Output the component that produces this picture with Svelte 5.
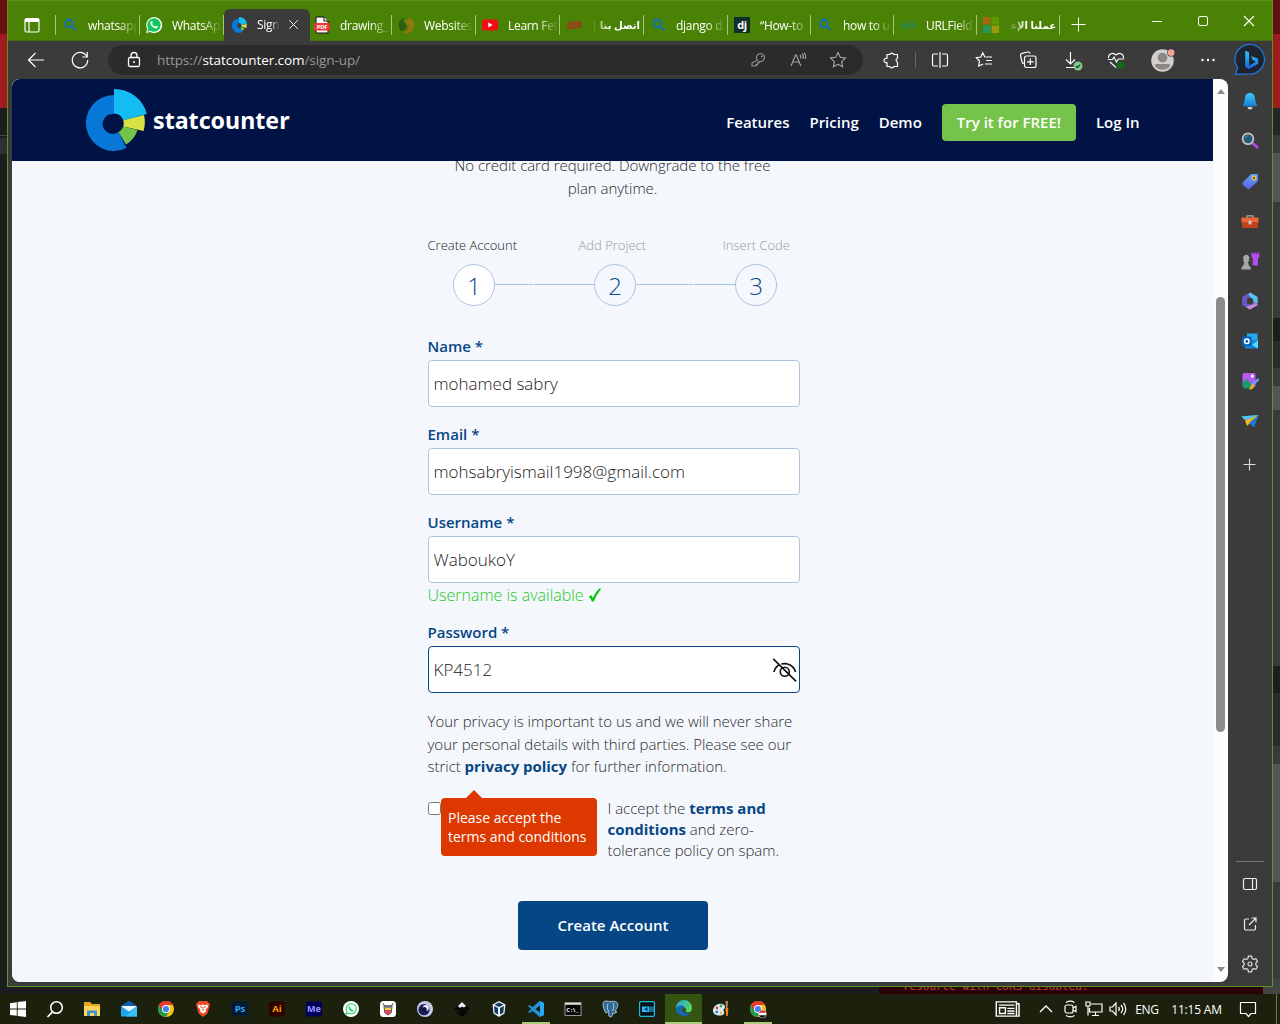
<script>
  const search = '<g fill="none" stroke="#0e6fc4" stroke-width="1.900"><circle cx="9" cy="8.500" r="3.800"/><path d="M11.800 11.300l3.700 3.700"/></g>';
  const pie = '<path d="M10 3.500A7.200 7.200 0 1 0 13.500 17L11.500 13A2.600 2.600 0 1 1 10 8z" fill="#0a78d6"/><path d="M10 2A8.500 8.500 0 0 1 18 8.500L12.500 10A2.600 2.600 0 0 0 10 8z" fill="#13bcf0"/><path d="M12.600 10L17.600 9V13L12.500 11.500z" fill="#d7e34a"/><path d="M12.400 12L15.600 13.200A7 7 0 0 1 13 16L11.500 13z" fill="#76c34b"/>';
  const chrome = '<circle cx="10" cy="10" r="8" fill="#fbc116"/><path d="M10 10L3.100 6A8 8 0 0 1 17 6H10z" fill="#e33b2e"/><path d="M3.100 6A8 8 0 0 0 9.800 18L13.500 12L10 10z" fill="#229a4b"/><path d="M3.100 6A8 8 0 0 1 17 6H10L6.500 12z" fill="#e33b2e"/><circle cx="10" cy="10" r="4" fill="#fff"/><circle cx="10" cy="10" r="3.100" fill="#4084f0"/>';
  const whatsapp = '<path d="M2 18l1.200-4A8 8 0 1 1 6.200 17z" fill="#fff"/><path d="M3.300 16.700l1-3.100A6.700 6.700 0 1 1 6.600 15.800z" fill="#10c75b"/><path d="M7 6.200c.7-.6 1.300 0 1.800 1.500l-.7 1c.6 1.400 1.600 2.300 3 2.900l1-.9c1.500.6 2 .9 1.600 1.700-1 1.900-3.200 1.200-5.300-.6S5.700 7.500 7 6.200z" fill="#fff"/>';

  const art = {
    tabs: '<path d="M4.500 3.500h11a1.500 1.500 0 0 1 1.500 1.500v10.500a1.500 1.500 0 0 1-1.500 1.500h-11A1.500 1.500 0 0 1 3 15.500V5a1.500 1.500 0 0 1 1.500-1.500zM7 7v10" fill="none" stroke="#fff" stroke-width="1.200"/><path d="M3 4h14v3H3z" fill="#fff"/>',
    search, pie, chrome, whatsapp,
    pdf: '<path d="M4 2h8l4 4v12H4z" fill="#fff" stroke="#111" stroke-width="1"/><path d="M12 2v4h4" fill="#fff" stroke="#111"/><rect x="2" y="8" width="16" height="7.500" rx="1" fill="#e33"/><text x="10" y="14" font-size="6" font-weight="700" text-anchor="middle" fill="#fff">PDF</text>',
    leaf: '<path d="M9 2.500A8 8 0 0 0 5 16c5-1 7-4 4-7C7 7 7 4 9 2.500z" fill="#2d5c14"/><path d="M6 17.500A8 8 0 0 0 14 3c-4 1-6 3-3 6s1 7-5 8.500z" fill="#907711"/>',
    youtube: '<rect x="2" y="4.500" width="16" height="11" rx="2.500" fill="#f20d12"/><path d="M8.300 7.500v5l4.300-2.500z" fill="#fff"/>',
    stamp: '<path d="M4 7l13-1v7L3 14z" fill="#984016"/><path d="M6 8v4M8 8v4M11 8v4M13 8v4" stroke="#7a681c"/>',
    dj: '<rect x="2" y="2" width="16" height="16" fill="#10302a"/><text x="10" y="13.500" font-size="11" font-weight="700" text-anchor="middle" fill="#fff">dj</text>',
    gfg: '<g fill="none" stroke="#258a4c" stroke-width="1.300"><path d="M2.500 10h15M8.500 8A3 3 0 1 0 8.500 12V10M11.500 8A3 3 0 1 1 11.500 12V10"/></g>',
    ms: '<path d="M2 2h7.500v7.500H2z" fill="#a06810"/><path d="M10.500 2H18v7.500h-7.500z" fill="#5e9a06"/><path d="M2 10.500h7.500V18H2z" fill="#27965c"/><path d="M10.500 10.500H18V18h-7.500z" fill="#98990b"/>',
    plus: '<path d="M9.500 2.500v14M2.500 9.500h14" stroke="#fff" stroke-width="1.100"/>',
    plusThin: '<path d="M9.500 4.500v12M3.500 10.500h12" stroke="#ddd" stroke-width="1.100"/>',
    min: '<path d="M5 10.500h10" stroke="#fff"/>',
    max: '<rect x="5.500" y="5.500" width="9" height="9" rx="1.500" fill="none" stroke="#fff"/>',
    close: '<path d="M5 5l10 10M15 5L5 15" stroke="#fff" stroke-width="1.100"/>',
    back: '<path d="M18 10H2.500M9.500 3l-7 7 7 7" fill="none" stroke="#fff" stroke-width="1.200"/>',
    refresh: '<path d="M16.800 6.500A7.700 7.700 0 1 0 17.700 10M17.300 2v5h-5" fill="none" stroke="#fff" stroke-width="1.200"/>',
    lock: '<rect x="4.500" y="7.500" width="11" height="9" rx="1.500" fill="none" stroke="#fff" stroke-width="1.300"/><path d="M7 7.500V5.500a3 3 0 0 1 6 0v2" fill="none" stroke="#fff" stroke-width="1.300"/><circle cx="10" cy="12" r="1" fill="#fff"/>',
    key: '<path d="M9.500 10.200A4 4 0 1 1 12.300 11.500L11 11.600V13H9.500v1.600H8V16H4v-3z" fill="none" stroke="#969696" stroke-width="1.100"/><circle cx="13.800" cy="6.500" r=".9" fill="#969696"/>',
    read: '<path d="M3 16L7.500 5h.8l4.500 11M4.500 12h6.800M12 5c1 1 1 2.500.4 3.500M14 3.500c1.600 1.800 1.700 4 .8 5.500M16 2.500c2 2.500 2 4.500 1.300 6.500" fill="none" stroke="#a5a5a5" stroke-width="1.100"/>',
    star: '<path d="M10 2.500l2.300 4.800 5.200.7-3.800 3.600.9 5.200L10 14.300l-4.600 2.500.9-5.200L2.500 8l5.200-.7z" fill="none" stroke="#aaa" stroke-width="1.100"/>',
    puzzle: '<path d="M6 4.500h2.700a2.200 2.200 0 0 1 4.100 0h3.700v3.700a2.200 2.200 0 0 0 0 4.100v4.200h-3.700a2.200 2.200 0 0 1-4.100 0H6v-4a2.200 2.200 0 1 1 0-4.100z" fill="none" stroke="#fff" stroke-width="1.200" stroke-linejoin="round"/>',
    split: '<path d="M8 4H4a1.500 1.500 0 0 0-1.500 1.500v9A1.500 1.500 0 0 0 4 16h4M12 4h4a1.500 1.500 0 0 1 1.500 1.500v9A1.500 1.500 0 0 1 16 16h-4M10 2v16" fill="none" stroke="#fff" stroke-width="1.200"/>',
    fav: '<path d="M11 7h-.2L8.800 2.800 6.800 7l-4.500.7L5.500 11l-.8 5 4.500-2M11.500 7H18M12 10.500h6M11 14h7" fill="none" stroke="#fff" stroke-width="1.200"/>',
    collect: '<path d="M6 13.500A2 2 0 0 1 4 12L2.500 5.500A2 2 0 0 1 4 3.300L9.500 2a2 2 0 0 1 2.500 1.500" fill="none" stroke="#fff" stroke-width="1.200"/><rect x="6.500" y="6" width="11.500" height="11.500" rx="2" fill="none" stroke="#fff" stroke-width="1.200"/><path d="M12.300 8.500v6.500M9 11.800h6.600" stroke="#fff" stroke-width="1.200"/>',
    download: '<path d="M7.500 2v12M3 9.500L7.500 14 12 9.500M3 17.500h8" fill="none" stroke="#fff" stroke-width="1.200"/><circle cx="15" cy="16" r="4.500" fill="#80c98b"/><path d="M12.800 16l1.700 1.600 2.700-3" fill="none" stroke="#17351b" stroke-width="1.100"/>',
    heart: '<path d="M10 5.200C7 1.500 2 4 2.500 8M10 5.200C13 1.500 18 4 17.500 8M1.800 9.500h4.500L8 7l2.500 5 1.800-3h6M4 12l6 5.500" fill="none" stroke="#fff" stroke-width="1.100"/><circle cx="14.500" cy="15.200" r="3.500" fill="#0f6f14"/>',
    avatar: '<circle cx="10" cy="10" r="9.800" fill="#d1cfcd"/><circle cx="10" cy="7.500" r="4.200" fill="#8b8784"/><path d="M3.300 14.500q0-1.500 1.500-1.500h10.400q1.500 0 1.500 1.500a8 8 0 0 1-13.400 0z" fill="#8b8784"/><circle cx="17.500" cy="3.200" r="3.400" fill="#3b3b3b"/><circle cx="17.500" cy="3.200" r="2.900" fill="#f9a09b"/>',
    dots: '<g fill="#fff"><circle cx="4.500" cy="10" r="1.200"/><circle cx="10" cy="10" r="1.200"/><circle cx="15.500" cy="10" r="1.200"/></g>',
    bing: '<defs><linearGradient id="bg1" x2="0" y2="1"><stop stop-color="#2ec5ee"/><stop offset="1" stop-color="#1769e8"/></linearGradient></defs><path d="M.8 19L2.300 14.800A9.200 9.200 0 1 1 10.300 18.700Q5 18.700.8 19z" fill="#1d2430" stroke="#1b78dc" stroke-width=".8"/><path d="M7 4.200l2.400.9v8.500l4.300-2.500-2-1-1-2.600 4.400 1.700v3.100l-5.800 3.400L7 14z" fill="url(#bg1)"/>',
    bell: '<defs><linearGradient id="be" x2="0" y2="1"><stop stop-color="#3cc7f1"/><stop offset="1" stop-color="#167fd8"/></linearGradient></defs><path d="M10 2c3.500 0 5 2.500 5 5.500l.8 4 1.600 3.700H2.600l1.600-3.700L5 7.500C5 4.500 6.500 2 10 2z" fill="url(#be)"/><path d="M7.500 16h5a2.500 2.500 0 0 1-5 0z" fill="#ccc"/>',
    magnify: '<path d="M12.500 12l5.500 5" stroke="#b846e8" stroke-width="3"/><circle cx="8" cy="7.800" r="5.400" fill="#245a78" stroke="#c6c3c1" stroke-width="1.800"/><path d="M5.500 7a3 3 0 0 1 3-2.500" stroke="#4c92b5" fill="none"/>',
    tag: '<defs><linearGradient id="tg" x2="0" y2="1"><stop stop-color="#5ca0fa"/><stop offset="1" stop-color="#5b62ec"/></linearGradient></defs><path d="M11 3h6a1 1 0 0 1 1 1v6L9.500 18Q8.500 18.500 7.500 17.800L2.500 13.500Q2 12.500 2.800 11.500z" fill="url(#tg)"/><circle cx="14" cy="7" r="1.900" fill="#4b648d" stroke="#ffc524" stroke-width="1.200"/>',
    toolbox: '<path d="M7 7V4.800h6V7" fill="none" stroke="#aaa" stroke-width="1.300"/><rect x="1.500" y="6.500" width="17" height="5.500" rx="1" fill="#ee6432"/><rect x="2.200" y="11" width="15.600" height="6" rx="1" fill="#c8411d"/><rect x="8.500" y="9.500" width="3" height="4" rx="1" fill="#c8c8c8"/>',
    chess: '<path d="M11.500 1.500h1.800V3h1.300V1.500h1.900V3h1.300V1.500h1.500v5l-1.300 1v7h-5.500l.4-7-1.400-1z" fill="#b24ef0"/><path d="M4 9a3 3 0 1 1 4.500 0l1 1-1.500 1 .7 3 2 2.500V18.500H1.500v-2l2-2.500.8-3L3 10z" fill="#aaa8a6"/>',
    office: '<defs><linearGradient id="of" x2=".8" y2="1"><stop stop-color="#9570e8"/><stop offset=".5" stop-color="#3f73ce"/><stop offset="1" stop-color="#d07cd8"/></linearGradient></defs><path d="M10 1.500L17.500 6v8L10 18.500 2.500 14V6zM7 7.500v5l4 1.500 2.300-2V8L10 6z" fill="url(#of)" fill-rule="evenodd"/><path d="M10 1.500L17.500 6v6l-4.200-1.500V8L8 5z" fill="#5ac2f0"/><path d="M2.500 6L8 2.500 10 6 7 7.800V13l4 1.500-5 1.500-3.500-2z" fill="#6758c4"/><path d="M6 16l5-2 6.500-1v1L10 18.500z" fill="#c58ae0"/>',
    outlook: '<path d="M7 2.500h10.500v10H7z" fill="#28a9ea"/><path d="M5 9h13v8.500H5z" fill="#1583d8"/><path d="M18 9l-6 5 6 3.500z" fill="#50d9ff"/><rect x="2" y="5.500" width="9.500" height="9.500" rx="1" fill="#0564b8"/><circle cx="6.800" cy="10.200" r="2.300" fill="none" stroke="#fff" stroke-width="1.500"/>',
    picture: '<rect x="2.500" y="2" width="13" height="14" rx="1.500" fill="#b35cf0"/><circle cx="12.300" cy="5" r="1.500" fill="#fff"/><path d="M2.500 12L7 8l6 7-3 2.500H3.500z" fill="#179b68"/><path d="M18.500 8L12 15" stroke="#6ea2f7" stroke-width="2.500"/><path d="M12.500 13l2 2c-1.500 3-3 3.500-5.500 3.500 1.500-1.500 1-4.500 3.500-5.500z" fill="#f7ae24"/>',
    plane: '<path d="M1.500 5.500L18.500 4 14 16 9 12z" fill="#2aa5e8"/><path d="M18.500 4L5 9.500 7 15l3-3z" fill="#f6b722"/><path d="M1.500 5.500L18.500 4 5 9z" fill="#53c6f2"/><path d="M18.500 4L9 12l5 4z" fill="#1b79cf"/>',
    panel: '<rect x="3.500" y="4.500" width="13" height="11" rx="1.500" fill="none" stroke="#eee" stroke-width="1.200"/><path d="M12.500 4.500v11" stroke="#eee" stroke-width="1.200"/>',
    external: '<path d="M9 5H6a1.500 1.500 0 0 0-1.500 1.500v8A1.500 1.500 0 0 0 6 16h8a1.500 1.500 0 0 0 1.500-1.500V11M11.500 4H16v4.500M9 11l7-7" fill="none" stroke="#eee" stroke-width="1.200"/>',
    gear: '<path d="M8.400 2.200h3.200l.5 2.300 1.500.9 2.300-.7 1.600 2.800-1.700 1.700v1.700l1.700 1.600-1.600 2.800-2.300-.7-1.500.9-.5 2.300H8.400l-.5-2.300-1.500-.9-2.300.7-1.600-2.800 1.700-1.600V9.200L2.500 7.500l1.600-2.800 2.300.7 1.500-.9z" fill="none" stroke="#ddd" stroke-width="1.200" stroke-linejoin="round"/><circle cx="10" cy="10" r="2" fill="none" stroke="#ddd" stroke-width="1.200"/>',
    eye: '<g fill="none" stroke="#111" stroke-width="1.300"><path d="M1 1.500l18.300 18M1.500 12c.8-3 2.500-4.900 4.600-6M7.500 5.600C12.500 4.300 17.500 7 18.800 12"/><circle cx="10.200" cy="11.800" r="3.600"/></g>',
    windows: '<path d="M2 4.200l6.800-1v6.300H2zM9.700 3L18 2v7.500H9.700zM2 10.500h6.800v6.300L2 15.900zM9.700 10.500H18V18l-8.300-1z" fill="#fff"/>',
    taskSearch: '<circle cx="11.500" cy="8.500" r="5.800" fill="none" stroke="#fff" stroke-width="1.500"/><path d="M7.500 12.800L2.500 18" stroke="#fff" stroke-width="1.700"/>',
    folder: '<path d="M2 3h6l2 2h8v11H2z" fill="#e8a51c"/><path d="M2 7h16v10H2z" fill="#ffd45b"/><path d="M5 11.500h10V17h-2.800v-3H8v3H5z" fill="#3c94d8"/>',
    mail: '<path d="M2 7l8-5.500L18 7v10H2z" fill="#0c5eaa"/><path d="M3 7h14v7H3z" fill="#fff"/><path d="M2 7l8 5.500L18 7v10.500H2z" fill="#1fa4ea"/><path d="M18 7L7 17.500h11z" fill="#38bff5"/><path d="M3 7h14l-7 5z" fill="#eef8ff"/>',
    brave: '<path d="M6 2h8l1.500 1.500L17 5l-.7 3-2 6.500L10 18l-4.300-3.500-2-6.500L3 5l1.500-1.500z" fill="#f24a25"/><path d="M5.500 5.500l2.500.7 2-.7 2 .7 2.500-.7.5 2.500-2.500 2.500.5 2-3 2-3-2 .5-2L5 8z" fill="#fff"/><path d="M7 7.500l2 1M13 7.500l-2 1M10 8v4" stroke="#f24a25"/>',
    ps: '<rect x="2" y="2.500" width="16" height="15" rx="2" fill="#001c33"/><text x="10" y="13.300" font-size="9.500" font-weight="700" text-anchor="middle" fill="#31a8ff">Ps</text>',
    ai: '<rect x="2" y="2.500" width="16" height="15" rx="2" fill="#310000"/><text x="10" y="13.300" font-size="9.500" font-weight="700" text-anchor="middle" fill="#ff9a00">Ai</text>',
    me: '<rect x="2" y="2.500" width="16" height="15" rx="2" fill="#00005b"/><text x="10" y="13.300" font-size="9" font-weight="700" text-anchor="middle" fill="#9999ff">Me</text>',
    wa2: '<circle cx="10" cy="10" r="8" fill="#fff"/><path d="M5 15l.9-2.800A5 5 0 1 1 8 14.200z" fill="none" stroke="#25d366" stroke-width="1.100"/><path d="M8 7.500c.4 2.500 2 4.200 4.300 4.500" stroke="#25d366" stroke-width="1.700" fill="none"/>',
    brush: '<rect x="2" y="2" width="16" height="16" rx="3.500" fill="#fff"/><path d="M6 7l.8 7L10 16l3.200-2 .8-7z" fill="#f5d23c" stroke="#555"/><path d="M7 11h6l-.5 3-2.500 1.500L7.500 14z" fill="#e33e6a"/><path d="M6.500 7h7l-.2 2H6.700z" fill="#8a8aa8"/><path d="M5 4.500l1.500 2.500h7L15 4.500" fill="none" stroke="#555" stroke-width="1.100"/>',
    cinema: '<circle cx="10" cy="10" r="8" fill="#c9cbe6"/><circle cx="9" cy="10.700" r="5.600" fill="#1b1e5c"/><circle cx="10.800" cy="9" r="3" fill="#f4f4fb"/><circle cx="9.300" cy="10.600" r="2.500" fill="#15163a"/>',
    inkscape: '<path d="M10 2.500l7.500 7c.5 1.500-3 1.500-3 2.500s2 .5 1.500 1.500-3 .5-4 3.500h-4c-.5-2-3.500-2-3.500-3s2-1 1.500-2-4-1-3.500-2.500z" fill="#080808"/><path d="M10 3l4 4-2 1.500-2-1-2 1.500L6 7z" fill="#eceef5"/>',
    vbox: '<path d="M10 2l6.500 3.500-1 9L10 18l-5.500-3.500-1-9z" fill="#e6eef8"/><path d="M10 3.500l4.500 2.200L10 8 5.500 5.700zM5 7l4 2v6.500L5.700 13.700zM15 7l-4 2v6.500l3.300-1.800z" fill="#16375f"/>',
    vscode: '<path d="M13.500 2L18 4v12l-4.500 2-7-6.300L3.500 14 2 13l3.300-3L2 7l1.500-1 3 2.300zM14 6.500L9.300 10l4.700 3.500z" fill="#1e94de" fill-rule="evenodd"/><path d="M14 2.200L18 4v12l-4 1.800z" fill="#29a9f2"/>',
    cmd: '<rect x="2" y="4" width="16" height="12.500" fill="#050505" stroke="#bbb" stroke-width=".8"/><path d="M2 3.600h16v2.200H2z" fill="#ddd"/><text x="3.200" y="13" font-size="5.800" font-weight="700" fill="#fff" textLength="12.500">C:\\_</text>',
    postgres: '<path d="M4 2.500c2-1 4 0 6 0s5-1 7 1 0 6-2 8.500l2 .7-2 1.500h-2.500c0 3-1 4-2.500 3.700S8.500 15 8.500 12.500L6 14C3.500 11 2 4 4 2.500z" fill="#346a98" stroke="#a9bdcf" stroke-width="1"/><path d="M8 4.500c-1 3-1 5 .5 7.500M12.500 4c2 2 1.500 5 0 8" fill="none" stroke="#d7e3ec" stroke-width=".8"/>',
    camera: '<rect x="2.600" y="2.600" width="14.800" height="14.800" rx="1.500" fill="#071019" stroke="#22bce0" stroke-width="1.200"/><path d="M5 7.500h7.500V13H5z" fill="#26c2ee"/><path d="M10.500 8v4L7 10.200z" fill="#0b2b80"/><path d="M14 7.500V13M16 7.500V13" stroke="#26c2ee"/>',
    edge: '<defs><linearGradient id="ed" x1="0" x2="1" y2=".6"><stop stop-color="#259fe6"/><stop offset="1" stop-color="#58d962"/></linearGradient></defs><path d="M2 9A8 8 0 0 1 18 9c.3 4-4 5-6.500 3.500 1.500-1.500.5-4.500-2.500-4.500-4 0-6 3-5 6.500A8 8 0 0 1 2 9z" fill="url(#ed)"/><path d="M2 9.500C3.500 6.500 8 5.500 10.500 8c-3 .5-3 4-.5 5.500 2 1.300 5 1 6.800-.5A8 8 0 0 1 2 9.500z" fill="#1467bd"/>',
    paint: '<path d="M2 12c0-4 4-8 9-7 4 1 3.500 4 2 5s1 3 0 5-10 3-11-3z" fill="#d9ecf7"/><circle cx="6" cy="9" r="1.400" fill="#e4432c"/><circle cx="10" cy="7" r="1.400" fill="#3aa445"/><circle cx="5.700" cy="13" r="1.400" fill="#2b7dd2"/><circle cx="10" cy="14" r="1.300" fill="#f2b21e"/><path d="M14.500 2h2.500l-.5 7h-1.500z" fill="#b48b60"/><path d="M14.300 9h3l-.5 8h-1.600z" fill="#f2811e"/>',
    chrome2: chrome + '<circle cx="14.500" cy="15" r="4" fill="#f7f7f7"/><path d="M10.800 13.800a4 4 0 0 1 7.400 0z" fill="#dc2b2b"/><path d="M10.800 16.300a4 4 0 0 0 7.400 0z" fill="#111"/>',
    news: '<g fill="none" stroke="#fff" stroke-width="1.100"><path d="M1 4.500h15.500v11H1zM16.500 6h2v9.500h-3"/><path d="M3.500 9h4.500v4.500H3.500z"/><path d="M3 7h12M9.500 9.500H15M9.500 11.500H15M9.500 13.500H15"/></g>',
    chevron: '<path d="M4 13l6-6 6 6" fill="none" stroke="#fff" stroke-width="1.300"/>',
    meet: '<g fill="none" stroke="#fff" stroke-width="1.200"><rect x="5" y="6" width="8" height="8" rx="2"/><path d="M13 9l3-1.800v5.600L13 11M6 3.500c2.500-1.500 6-1.500 8.500 0M6 16.500c2.500 1.500 6 1.500 8.500 0"/></g>',
    network: '<g fill="none" stroke="#fff" stroke-width="1.200"><path d="M7 5h11v8H5.500V9M11.500 13v3.500M8 16.500h7M2 3h4v4H2zM4 7v9.500"/></g>',
    speaker: '<g fill="none" stroke="#fff" stroke-width="1.200"><path d="M2 8h2.500L8 4v12l-3.500-4H2zM10.500 8c1 1.200 1 2.800 0 4M13 6c2 2.400 2 5.600 0 8M15.500 4c3 3.500 3 8.500 0 12"/></g>',
    notif: '<path d="M2.500 3.500h15v11H13l-2.500 3-2.500-3H2.500z" fill="none" stroke="#fff" stroke-width="1.200"/>'
  };

  const tabs = [
    { icon: 'search', label: 'whatsapp' },
    { icon: 'whatsapp', label: 'WhatsAp' },
    { icon: 'pie', label: 'Sign', active: true },
    { icon: 'pdf', label: 'drawing_' },
    { icon: 'leaf', label: 'Websites' },
    { icon: 'youtube', label: 'Learn Fet' },
    { icon: 'stamp', label: 'اتصل بنا | ا', rtl: true },
    { icon: 'search', label: 'django d' },
    { icon: 'dj', label: '“How-to' },
    { icon: 'search', label: 'how to u' },
    { icon: 'gfg', label: 'URLField' },
    { icon: 'ms', label: 'عملنا الإعلا', rtl: true }
  ];
  const actions = ['split', 'fav', 'collect', 'download', 'heart', 'avatar', 'dots', 'bing'];
  const rail = ['bell', 'magnify', 'tag', 'toolbox', 'chess', 'office', 'outlook', 'picture', 'plane'];
  const railBottom = ['panel', 'external', 'gear'];
  const apps = ['windows', 'taskSearch', 'folder', 'mail', 'chrome', 'brave', 'ps', 'ai', 'me', 'wa2', 'brush', 'cinema', 'inkscape', 'vbox', 'vscode', 'cmd', 'postgres', 'camera', 'edge', 'paint', 'chrome2'];
  const running = ['vscode', 'edge', 'chrome2'];
  const steps = ['Create Account', 'Add Project', 'Insert Code'];
</script>

{#snippet icon(name, size = 20)}
  <svg class="icon" width={size} height={size} viewBox="0 0 20 20">{@html art[name]}</svg>
{/snippet}

<div class="desktop">
  <div class="workspace">
    <div class="edge-left"></div>
    <div class="edge-right"></div>
    <div class="console"><span>resource with CORS disabled.</span></div>

    <div class="window">
      <div class="tabstrip">
        <div class="tabmenu">{@render icon('tabs')}</div>
        {#each tabs as tab}
          <div class="tab" class:active={tab.active} class:rtl={tab.rtl}>
            {@render icon(tab.icon)}
            <span class="tab-label" dir={tab.rtl ? 'rtl' : 'ltr'}>{tab.label}</span>
            {#if tab.active}{@render icon('close', 17)}{/if}
          </div>
        {/each}
        <div class="newtab">{@render icon('plus')}</div>
        <div class="controls">
          <span>{@render icon('min')}</span><span>{@render icon('max')}</span><span>{@render icon('close')}</span>
        </div>
      </div>

      <div class="toolbar">
        <span class="tool">{@render icon('back')}</span>
        <span class="tool">{@render icon('refresh')}</span>
        <div class="address">
          {@render icon('lock')}
          <span class="url">https://<b>statcounter.com</b>/sign-up/</span>
          <span class="address-icons">
            {@render icon('key')}{@render icon('read')}{@render icon('star')}
          </span>
        </div>
        <span class="tool">{@render icon('puzzle')}</span>
        <span class="tool-sep"></span>
        {#each actions as name}
          <span class="tool {name}">{@render icon(name, name === 'bing' ? 32 : name === 'avatar' ? 23 : 20)}</span>
        {/each}
      </div>

      <div class="content">
        <div class="viewport">
          <div class="page">
            <header>
              <svg class="logo" width="206" height="66" viewBox="0 0 206 66">
                <path d="M29 8A28 28 0 1 0 41.500 61L33.500 45A10 10 0 1 1 29 27z" fill="#0878d8" />
                <path d="M29 2A33.500 33.500 0 0 1 61.800 27L38.300 33.300A9.500 9.500 0 0 0 29 26.500z" fill="#13bcf2" />
                <path d="M38.300 33.300L59 28A30 30 0 0 1 58.500 44L38.300 39.500A10 10 0 0 0 38.300 33.300z" fill="#d8e343" />
                <path d="M38.300 39.500L52.500 43A25 25 0 0 1 41 57.500L33.500 45A10 10 0 0 0 38.300 39.500z" fill="#76c34b" />
                <text x="68" y="42" textLength="136.500" lengthAdjust="spacingAndGlyphs">statcounter</text>
              </svg>
              <nav>
                <a href="#features">Features</a>
                <a href="#pricing">Pricing</a>
                <a href="#demo">Demo</a>
                <a href="#try" class="try">Try it for FREE!</a>
                <a href="#login">Log In</a>
              </nav>
            </header>

            <main>
              <p class="hint">No credit card required. Downgrade to the free<br />plan anytime.</p>

              <div class="step-labels">
                {#each steps as step, i}<span class:current={i === 0}>{step}</span>{/each}
              </div>
              <div class="steps">
                <span class="dot current">1</span><i class="first"></i><i></i>
                <span class="dot">2</span><i class="mid"></i><i></i>
                <span class="dot">3</span><i class="stub"></i>
              </div>

              <form>
                <label for="name">Name *</label>
                <input id="name" value="mohamed sabry" />
                <label for="email">Email *</label>
                <input id="email" class="email" value="mohsabryismail1998@gmail.com" />
                <label for="user">Username *</label>
                <input id="user" value="WaboukoY" />
                <p class="available">Username is available
                  <svg width="14" height="16" viewBox="0 0 14 16"><path d="M.8 9.800L2.800 8q1.200.8 2 3Q7 5.500 11.500 1.200L13 2Q8.500 7.500 5.800 14.500H3.800Q2.800 11.500.8 9.800z" fill="#0bc60b" /></svg>
                </p>
                <label for="pass">Password *</label>
                <div class="password">
                  <input id="pass" value="KP4512" />
                  <span class="reveal">{@render icon('eye', 25)}</span>
                </div>
                <p class="privacy">
                  <span>Your privacy is important to us and we will never share</span><br />
                  <span>your personal details with third parties. Please see our</span><br />
                  <span>strict <a href="#privacy">privacy policy</a> for further information.</span>
                </p>
                <div class="terms">
                  <input type="checkbox" />
                  <p>I accept the <a href="#terms">terms and<br />conditions</a> and zero-<br />tolerance policy on spam.</p>
                  <div class="error">Please accept the<br />terms and conditions</div>
                </div>
                <button type="button">Create Account</button>
              </form>
            </main>
          </div>
          <div class="scrollbar">
            <span class="up"></span><span class="thumb"></span><span class="down"></span>
          </div>
        </div>

        <aside>
          {#each rail as name}<span class="rail-item">{@render icon(name)}</span>{/each}
          <span class="rail-item add">{@render icon('plusThin')}</span>
          <hr />
          {#each railBottom as name}<span class="rail-item">{@render icon(name)}</span>{/each}
        </aside>
      </div>
    </div>
  </div>

  <div class="taskbar">
    {#each apps as name}
      <span class="app" class:running={running.includes(name)} class:focused={name === 'edge'}>{@render icon(name)}</span>
    {/each}
    <div class="tray">
      <span class="news">{@render icon('news', 26)}</span>
      <span>{@render icon('chevron')}</span>
      <span>{@render icon('meet')}</span>
      <span>{@render icon('network')}</span>
      <span>{@render icon('speaker')}</span>
      <span class="lang">ENG</span>
      <span class="clock">11:15 AM</span>
      <span class="notif">{@render icon('notif')}</span>
    </div>
  </div>
</div>

<style>
  :global(body) { margin: 0; overflow: hidden; }
  .desktop {
    width: 1280px; height: 1024px; overflow: hidden;
    display: grid; grid-template-rows: 994px 30px;
    font-family: "Open Sans", "Noto Sans", "DejaVu Sans", sans-serif;
    color: #fff; background: #1d1d20;
  }
  * { box-sizing: border-box; }
  a { text-decoration: none; }
  p { margin: 0; }
  .icon { display: block; flex: none; overflow: visible; }

  .workspace { position: relative; overflow: hidden; }
  .edge-left, .edge-right { position: absolute; top: 0; height: 994px; }
  .edge-left {
    left: 0; width: 7px;
    background: linear-gradient(#6b1113 0 34px, #a01a1f 34px 108px, #1c1d1f 108px 135px, #444 135px 136px, #1d1d1f 136px 138px, #303034 138px 154px, #1d1d20 154px);
  }
  .edge-right {
    left: 1273px; width: 7px;
    background: linear-gradient(#5f0f12 0 34px, #a01a1f 34px 108px, #24262b 108px 135px, #3a3a3a 135px 153px, #555 153px 202px, #3a3a3a 202px 318px, #1d1e21 318px 341px, #2b2c31 341px 368px, #3a3a3a 368px 386px, #555 386px 410px, #3a3a3a 410px 666px, #1e1e20 666px 693px, #2a2b31 693px 746px, #3a3a3a 746px 764px, #555 764px 882px, #3a3a3a 882px);
  }
  .console {
    position: absolute; left: 879px; top: 979px; width: 401px; height: 16px;
    background: #2a0202; border-right: 17px solid #444; padding-left: 24px;
    font: 11px/16px "DejaVu Sans Mono", monospace; color: #b5483e; white-space: nowrap;
  }

  .window {
    position: absolute; left: 7px; top: 0; width: 1266px; height: 987px;
    border: 1px solid #5a961a; border-top-color: #5b8f22;
    background: #3b3b3b; display: grid; grid-template-rows: 40px 38px 1fr;
  }
  .tabstrip {
    display: grid; grid-template-columns: 48px repeat(8, 84px) repeat(4, 83px) 34px 1fr;
    background: #4a8205; border-bottom: 1px solid #427207;
  }
  .tabmenu { padding-left: 14px; border-right: 1px solid #a5c482; height: 20px; margin-top: 14px; }
  .tab {
    display: flex; align-items: center; height: 20px; margin-top: 14px; padding: 0 1px 0 4px; gap: 8px;
    font-size: 12px; letter-spacing: -.3px; border-right: 1px solid #a5c482; min-width: 0;
  }
  .tab-label {
    flex: 1; min-width: 0; overflow: hidden; white-space: nowrap;
    -webkit-mask-image: linear-gradient(90deg, #000 60%, transparent);
    mask-image: linear-gradient(90deg, #000 60%, transparent);
  }
  .tab.rtl { padding-right: 3px; }
  .tab.rtl .tab-label {
    font-weight: 700; letter-spacing: 0; font-size: 10px;
    -webkit-mask-image: linear-gradient(270deg, #000 65%, transparent);
    mask-image: linear-gradient(270deg, #000 65%, transparent);
  }
  .tab.active {
    height: 33px; margin-top: 8px; background: #3b3b3b; border: 0; border-radius: 6px 6px 0 0;
    width: 86px; padding: 0 8px 2px 5px; gap: 5px;
  }
  .tab.active .tab-label { margin-left: 3px; }
  .newtab { padding: 14px 0 0 9px; }
  .controls { display: flex; height: 40px; justify-content: flex-end; }
  .controls span { width: 46px; display: grid; place-items: center; }

  .toolbar { display: flex; align-items: center; padding-left: 6px; }
  .tool { width: 44px; display: grid; place-items: center; flex: none; }
  .address {
    width: 755px; height: 30px; margin: 0 6px; border-radius: 15px; background: #2b2b2b;
    display: flex; align-items: center; padding-left: 16px; flex: none;
  }
  .url { font-size: 13.500px; margin-left: 13px; color: #989898; letter-spacing: -.08px; }
  .url b { font-weight: 400; color: #fff; }
  .address-icons { margin-left: auto; display: flex; gap: 20px; padding-right: 15px; }
  .tool-sep { width: 1px; height: 16px; background: #666; margin: 0 2px; }
  .tool.download { width: 46px; }
  .tool.heart { width: 40px; }
  .tool.avatar { width: 52px; }
  .tool.dots { width: 40px; }

  .content { display: grid; grid-template-columns: 1216px 44px; padding-left: 4px; height: 903px; }
  .viewport {
    display: grid; grid-template-columns: 1201px 15px; overflow: hidden;
    border-radius: 8px; background: #fcfcfd; height: 903px;
  }
  .page { background: #f4f8fd; overflow: hidden; }
  header {
    height: 82px; background: #001344; display: flex; align-items: center; justify-content: space-between;
    padding: 0 73.500px 0 73px; position: relative; z-index: 1;
  }
  .logo text { font: 700 24px "Noto Sans", sans-serif; fill: #fff; }
  nav { display: flex; align-items: center; gap: 20px; padding-top: 5px; }
  nav a { color: #fff; font-weight: 600; font-size: 15px; line-height: 37px; white-space: nowrap; letter-spacing: -.01px; }
  .try { background: #76c34b; border-radius: 4px; padding: 0 15px; }

  main { color: #2b2b2b; font-weight: 300; }
  .hint { font-size: 15px; line-height: 22.500px; text-align: center; margin-top: -7px; white-space: nowrap; letter-spacing: -.04px; }
  .step-labels { display: grid; grid-template-columns: 89px 67px 67px; justify-content: start; margin: 36px 0 0 415.500px; column-gap: 62px; font-size: 13px; line-height: 20px; color: #999; white-space: nowrap; }
  .step-labels span:last-child { margin-left: 15px; }
  .step-labels .current { color: #222; }
  .steps { display: flex; align-items: center; margin: 9px 0 0 441px; height: 42px; }
  .dot {
    width: 42px; height: 42px; flex: none; border: 1px solid #b0c4de; border-radius: 50%;
    font-size: 24px; line-height: 41px; text-align: center; color: #0b4788;
  }
  .dot.current { background: #fff; }
  .steps i { height: 1px; width: 60px; background: #a9c1dc; margin-top: -1px; }
  .steps .first { width: 38px; margin-right: 1px; }
  .steps .mid { width: 57px; margin-right: 1px; }
  .steps .mid + i { width: 41px; }
  .steps .stub { width: 1px; }

  form { width: 372px; margin: 13px 0 0 416px; display: flex; flex-direction: column; }
  label { margin: 15px 0 0 -.5px; height: 26px; font-size: 15px; line-height: 24px; font-weight: 600; color: #074684; }
  input:not([type="checkbox"]) {
    width: 372px; height: 47px; border: 1px solid #b0c4de; border-radius: 4px; background: #fff; padding: 0 4.500px;
    font: 300 17px "Open Sans", sans-serif; color: #222; outline: 0; margin: 0; display: block;
  }
  .available { color: #1ec81e; font-size: 16px; line-height: 24px; height: 22px; white-space: nowrap; margin-left: -.5px; }
  .available svg { vertical-align: -2px; }
  .password { position: relative; }
  .password input:not([type="checkbox"]) { border-color: #074684; }
  .reveal { position: absolute; right: 3px; top: 11px; }
  .privacy { margin: 17px 0 0 -.5px; font-size: 15px; line-height: 22.500px; white-space: nowrap; letter-spacing: -.025px; }
  .privacy a, .terms a { font-weight: 700; color: #074684; }
  .terms { position: relative; margin-top: 20px; height: 63px; display: flex; justify-content: space-between; }
  .terms input { margin: 4px 0 0; width: 13px; height: 13px; }
  .terms p { width: 192.500px; font-size: 15px; line-height: 21px; white-space: nowrap; letter-spacing: -.02px; }
  .error {
    position: absolute; left: 13px; top: 0; width: 156px; height: 58px; border-radius: 4px; background: #dc3800;
    color: #fff; font-size: 14px; line-height: 19px; font-weight: 400; padding: 10px 7px; white-space: nowrap;
  }
  .error::before {
    content: ""; position: absolute; left: 25px; top: -8px;
    border: 8px solid transparent; border-top: 0; border-bottom-color: #dc3800;
  }
  button {
    width: 190px; height: 49px; margin: 40px 0 0 90px; border: 0; border-radius: 4px; background: #064685; color: #fff;
    font: 600 15px "Open Sans", sans-serif;
  }

  .scrollbar { display: flex; flex-direction: column; align-items: center; }
  .up, .down { border: 4.500px solid transparent; }
  .up { border-top: 0; border-bottom: 5px solid #8b8b8b; margin-top: 10px; }
  .thumb { width: 9px; height: 435px; margin-top: 203px; border-radius: 5px; background: #8b8b8b; }
  .down { border-bottom: 0; border-top: 5px solid #8b8b8b; margin: auto 0 10px; }

  aside { display: flex; flex-direction: column; align-items: center; padding-top: 2px; height: 905px; }
  .rail-item { height: 40px; width: 44px; display: grid; place-items: center; flex: none; }
  .add { height: 46px; }
  hr { width: 28px; height: 1px; border: 0; background: #777; margin: auto 0 2px; }

  .taskbar { display: flex; background: #1b210c; padding-right: 3px; }
  .app { width: 37px; height: 30px; display: grid; place-items: center; flex: none; }
  .app:first-child { width: 36px; }
  .running { background: linear-gradient(#a9cb7c, #a9cb7c) center bottom / 28px 2px no-repeat; }
  .running.focused { background-size: 100% 2px; background-color: #345410; }
  .tray { margin-left: auto; display: flex; align-items: center; font-size: 12px; }
  .tray span { width: 24px; display: grid; place-items: center; flex: none; white-space: nowrap; }
  .tray .news { width: 52px; }
  .tray .lang { width: 34px; letter-spacing: -.3px; }
  .tray .clock { width: 65px; letter-spacing: -.2px; }
  .tray .notif { width: 38px; margin-right: 9px; }
  .tray::after { content: ""; width: 1px; height: 30px; background: #6b7455; }
</style>
